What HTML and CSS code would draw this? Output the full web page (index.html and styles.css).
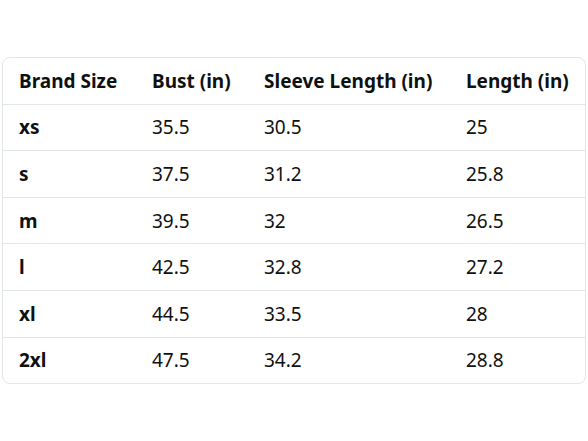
FILE: index.html
```html
<!DOCTYPE html>
<html>
<head>
<meta charset="utf-8">
<link rel="stylesheet" href="styles.css">
</head>
<body>
<div class="wrap">
  <table class="size-table">
    <colgroup>
      <col class="c1"><col class="c2"><col class="c3"><col class="c4">
    </colgroup>
    <thead>
      <tr><th>Brand Size</th><th>Bust (in)</th><th>Sleeve Length (in)</th><th>Length (in)</th></tr>
    </thead>
    <tbody>
      <tr><th>xs</th><td>35.5</td><td>30.5</td><td>25</td></tr>
      <tr><th>s</th><td>37.5</td><td>31.2</td><td>25.8</td></tr>
      <tr><th>m</th><td>39.5</td><td>32</td><td>26.5</td></tr>
      <tr><th>l</th><td>42.5</td><td>32.8</td><td>27.2</td></tr>
      <tr><th>xl</th><td>44.5</td><td>33.5</td><td>28</td></tr>
      <tr><th>2xl</th><td>47.5</td><td>34.2</td><td>28.8</td></tr>
    </tbody>
  </table>
</div>
</body>
</html>
```

FILE: styles.css
```css
html, body {
  margin: 0;
  padding: 0;
  background: #ffffff;
}
body {
  font-family: "Noto Sans", "Open Sans", sans-serif;
  color: #0f1111;
}
.wrap {
  padding: 57px 2px 0 2px;
}
.size-table {
  width: 584px;
  border-collapse: separate;
  border-spacing: 0;
  border: 1px solid #e3e6e6;
  border-radius: 8px;
  table-layout: fixed;
  font-size: 19px;
}
.c1 { width: 133px; }
.c2 { width: 112px; }
.c3 { width: 202px; }
.c4 { width: 135px; }
.size-table th,
.size-table td {
  text-align: left;
  padding: 0 0 0 16px;
  height: 45.6px;
  white-space: nowrap;
  border-bottom: 1px solid #e3e6e6;
}
.size-table tbody tr:last-child th,
.size-table tbody tr:last-child td {
  border-bottom: none;
}
.size-table th {
  font-weight: 700;
}
.size-table td {
  font-weight: 400;
}
```
